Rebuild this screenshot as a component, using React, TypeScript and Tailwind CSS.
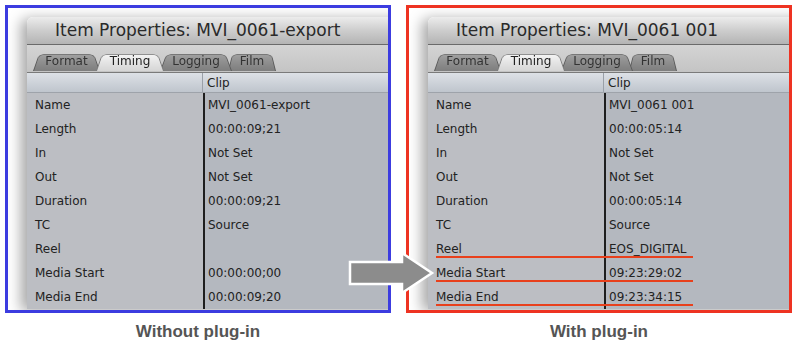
import React from "react";

type Row = { label: string; value: string; mark?: boolean };

const leftRows: Row[] = [
  { label: "Name", value: "MVI_0061-export" },
  { label: "Length", value: "00:00:09;21" },
  { label: "In", value: "Not Set" },
  { label: "Out", value: "Not Set" },
  { label: "Duration", value: "00:00:09;21" },
  { label: "TC", value: "Source" },
  { label: "Reel", value: "" },
  { label: "Media Start", value: "00:00:00;00" },
  { label: "Media End", value: "00:00:09;20" },
];

const rightRows: Row[] = [
  { label: "Name", value: "MVI_0061 001" },
  { label: "Length", value: "00:00:05:14" },
  { label: "In", value: "Not Set" },
  { label: "Out", value: "Not Set" },
  { label: "Duration", value: "00:00:05:14" },
  { label: "TC", value: "Source" },
  { label: "Reel", value: "EOS_DIGITAL", mark: true },
  { label: "Media Start", value: "09:23:29:02", mark: true },
  { label: "Media End", value: "09:23:34:15", mark: true },
];

const tabs = [
  { name: "Format", w: "w-[67px]", z: "z-[1]", active: false },
  { name: "Timing", w: "w-[68px]", z: "z-[3]", active: true },
  { name: "Logging", w: "w-[72px]", z: "z-[2]", active: false },
  { name: "Film", w: "w-[48px]", z: "z-[1]", active: false },
];

function Tab({ name, w, z, active }: (typeof tabs)[number]) {
  return (
    <div className={`relative ${w} ${z} h-[21px] -ml-[4px] first:ml-0 flex items-center justify-center`}>
      <div
        className={`absolute inset-0 rounded-t-[6px] border border-b-0 origin-bottom [transform:perspective(24px)_rotateX(14deg)] ${
          active
            ? "bg-gradient-to-b from-[#f4f4f4] to-[#d6d6d6] border-[#7c7c7c]"
            : "bg-gradient-to-b from-[#a0a0a0] to-[#7e7e7e] border-[#5a5a5a]"
        }`}
      />
      <span className={`relative text-[12px] ${active ? "text-[#222]" : "text-[#333]"}`}>{name}</span>
    </div>
  );
}

function Window({ title, rows }: { title: string; rows: Row[] }) {
  return (
    <div className="w-[420px] shrink-0 rounded-tl-[6px] overflow-hidden shadow-[-6px_2px_14px_rgba(0,0,0,0.35)] [font-family:'DejaVu_Sans',sans-serif]">
      {/* title bar */}
      <div className="h-[28px] flex items-center pl-[28px] bg-gradient-to-b from-[#ececec] via-[#cdcdcd] to-[#b4b4b4] border-b border-[#6a6a6a]">
        <span className="text-[17px] text-[#2a2a2a] leading-none">{title}</span>
      </div>
      {/* tab bar */}
      <div className="h-[27px] bg-gradient-to-b from-[#d4d4d4] to-[#c4c4c4] flex items-end pl-[6px]">
        <div className="flex items-end mb-px">
          {tabs.map((t) => (
            <Tab key={t.name} {...t} />
          ))}
        </div>
      </div>
      {/* header */}
      <div className="h-[21px] flex border-t border-[#7a7a7a] bg-gradient-to-b from-[#dde1e6] to-[#bfc5cd] border-b border-b-[#9ea3aa]">
        <div className="w-[176px] border-r border-[#9aa0a8]" />
        <div className="pl-[4px] text-[12px] text-[#222] flex items-center">Clip</div>
      </div>
      {/* rows */}
      <div className="flex bg-[#b4b8bf]">
        <div className="w-[176px] bg-[#bcbec3]">
          {rows.map((r) => (
            <div key={r.label} className="h-[24px] pl-[8px] flex items-center text-[12px] text-[#222]">
              {r.label}
            </div>
          ))}
        </div>
        <div className="w-[2px] bg-[#1e1e1e]" />
        <div className="flex-1">
          {rows.map((r) => (
            <div key={r.label} className="h-[24px] pl-[3px] flex items-center text-[12px] text-[#222]">
              {r.value}
            </div>
          ))}
        </div>
      </div>
      {/* annotations */}
      <div className="relative">
        {rows.map((r, i) =>
          r.mark ? (
            <div
              key={r.label}
              className="absolute left-[8px] w-[257px] h-[2px] bg-[#e8401c]"
              style={{ top: -(rows.length - i) * 24 + 24 - 5 }}
            />
          ) : null
        )}
      </div>
    </div>
  );
}

function Panel({ title, rows, border, caption }: { title: string; rows: Row[]; border: string; caption: string }) {
  return (
    <div className="flex flex-col items-center">
      <div className={`w-[386px] h-[308px] border-[3px] ${border} bg-white overflow-hidden pl-[19px] pt-[9px]`}>
        <Window title={title} rows={rows} />
      </div>
      <div className="mt-[6px] text-[17px] font-bold text-[#555] [font-family:'Liberation_Sans',Arial,sans-serif]">
        {caption}
      </div>
    </div>
  );
}

export default function App() {
  return (
    <div className="relative w-[800px] h-[342px] bg-white overflow-hidden">
      <div className="flex gap-[15px] pl-[5px] pt-[5px]">
        <Panel title="Item Properties: MVI_0061-export" rows={leftRows} border="border-[#3c3ce0]" caption="Without plug-in" />
        <Panel title="Item Properties: MVI_0061 001" rows={rightRows} border="border-[#ee3322]" caption="With plug-in" />
      </div>
      {/* arrow */}
      <svg className="absolute left-[346px] top-[249px]" width="92" height="50" viewBox="0 0 92 50">
        <polygon
          points="4,13 56,13 56,4 86,24 56,44 56,35 4,35"
          fill="#8c8c8c"
          stroke="#ffffff"
          strokeWidth="2.5"
          strokeLinejoin="miter"
        />
      </svg>
    </div>
  );
}
